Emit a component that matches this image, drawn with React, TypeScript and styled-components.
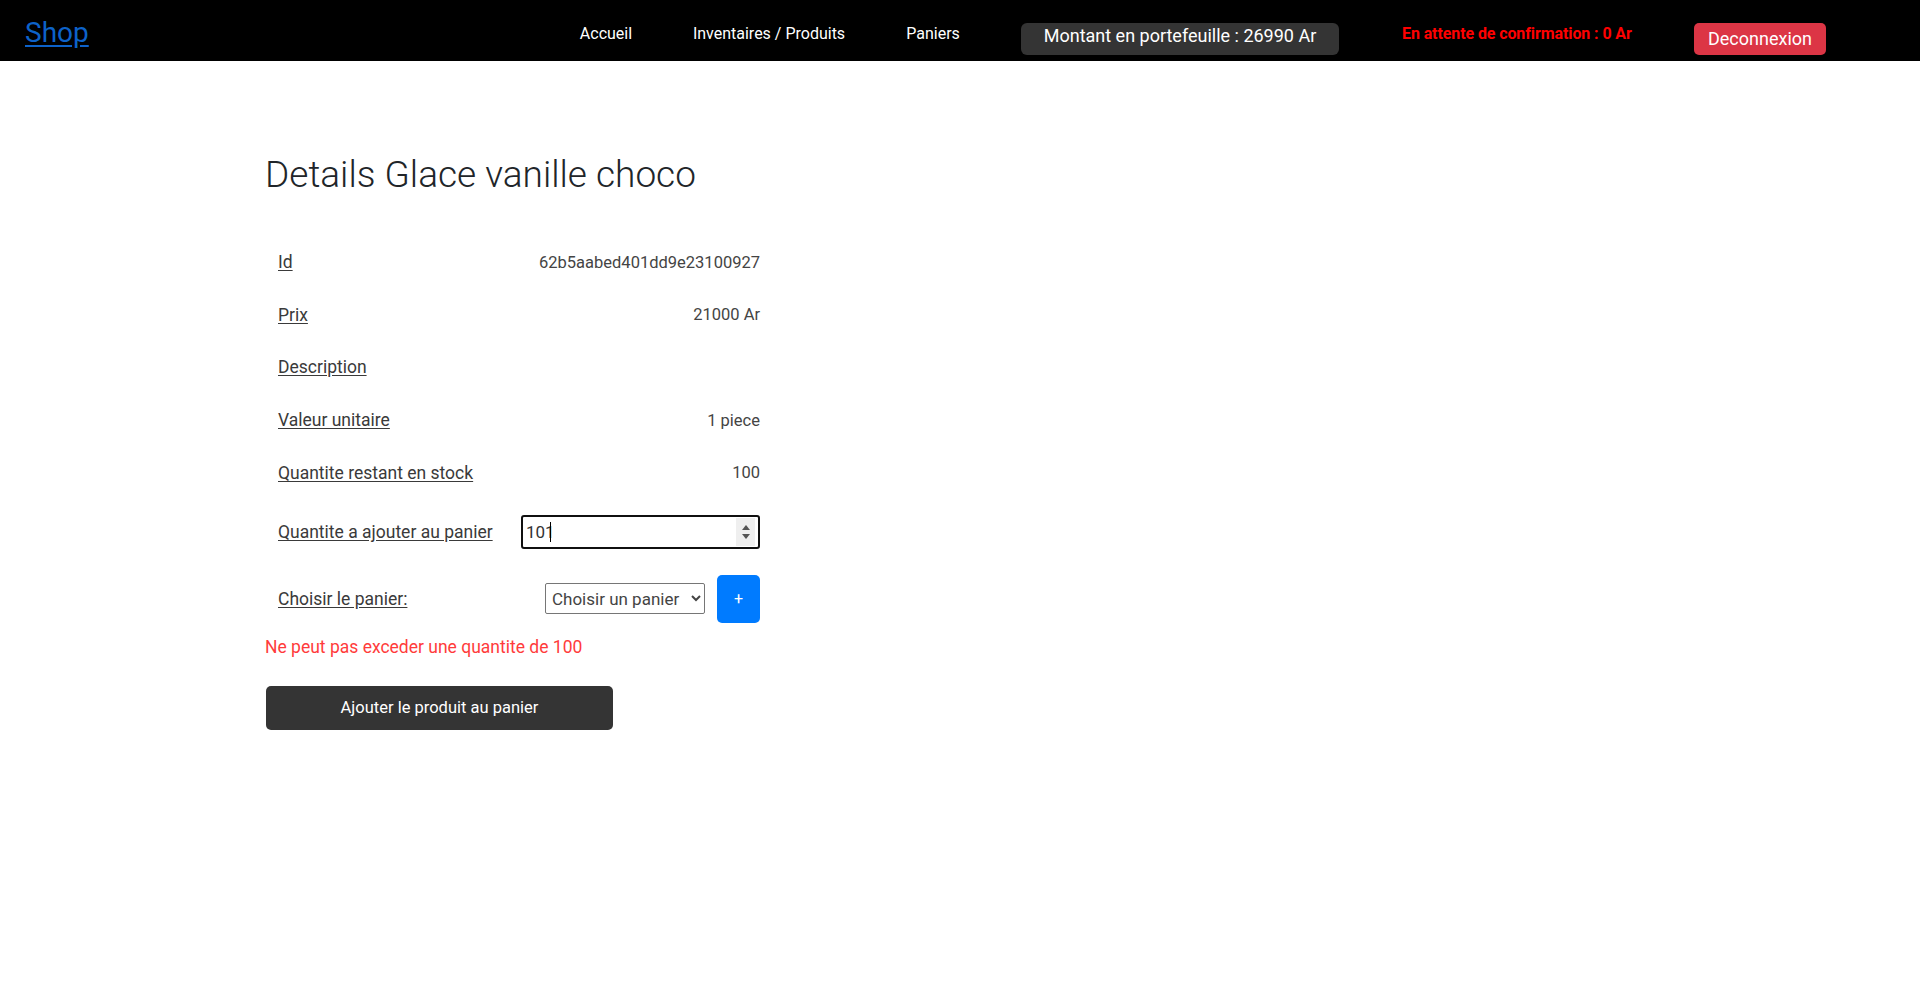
import React from "react";
import styled, { createGlobalStyle } from "styled-components";

const GlobalStyle = createGlobalStyle`
  html, body {
    margin: 0;
    padding: 0;
    background: #ffffff;
    font-family: Roboto, "Liberation Sans", Arial, sans-serif;
    color: #212529;
  }
  * { box-sizing: border-box; }
`;

const Navbar = styled.header`
  height: 61px;
  background: #000000;
  display: flex;
  align-items: flex-start;
  padding: 0 94px 0 25px;
`;

const Brand = styled.a`
  margin-top: 16px;
  font-size: 28px;
  line-height: 34px;
  color: #0d62c9;
  text-decoration: underline;
  text-underline-offset: 3px;
`;

const NavList = styled.nav`
  margin-left: auto;
  display: flex;
  align-items: flex-start;
  gap: 63px;
  padding-top: 23px;
`;

const NavLink = styled.a<{ $w: number }>`
  width: ${(p) => p.$w}px;
  font-size: 16px;
  line-height: 22px;
  color: #ffffff;
  text-decoration: none;
  white-space: nowrap;
  display: flex;
  justify-content: center;
`;

const Wallet = styled.div`
  width: 318px;
  height: 32px;
  background: #343434;
  border-radius: 6px;
  color: #ffffff;
  font-size: 18px;
  line-height: 26px;
  text-align: center;
  white-space: nowrap;
`;

const Pending = styled.div`
  width: 229px;
  font-size: 16px;
  line-height: 22px;
  font-weight: 700;
  letter-spacing: -0.1px;
  color: #ff0000;
  white-space: nowrap;
`;

const LogoutButton = styled.button`
  width: 132px;
  height: 32px;
  border: none;
  border-radius: 5px;
  background: #dc3545;
  color: #ffffff;
  font-family: inherit;
  font-size: 18px;
  padding: 0 0 2px;
`;

const Main = styled.main`
  padding: 92px 0 0 265px;
`;

const Title = styled.h1`
  margin: 0 0 39px;
  font-size: 37px;
  line-height: 44px;
  font-weight: 300;
  color: #212529;
`;

const DetailTable = styled.section`
  width: 495px;
  display: flex;
  flex-direction: column;
`;

const Row = styled.div<{ $h: number }>`
  height: ${(p) => p.$h}px;
  display: grid;
  grid-template-columns: 256px 239px;
  align-items: center;
`;

const Label = styled.span`
  padding-left: 13px;
  font-size: 17.5px;
  color: #3a3a3a;
  text-decoration: underline;
  text-underline-offset: 2px;
  white-space: nowrap;
`;

const Value = styled.span`
  text-align: right;
  font-size: 16.5px;
  color: #444444;
  white-space: nowrap;
`;

const InputWrap = styled.div`
  position: relative;
  height: 34px;
`;

const QtyInput = styled.input`
  width: 100%;
  height: 34px;
  border: 2px solid #101010;
  border-radius: 3px;
  outline: none;
  padding: 0 24px 0 3px;
  font-family: inherit;
  font-size: 17px;
  color: #333333;
  background: #ffffff;
`;

const Spinner = styled.div`
  position: absolute;
  right: 5px;
  top: 3px;
  width: 19px;
  height: 28px;
  background: #efefef;
  display: flex;
  align-items: center;
  justify-content: center;
`;

const Caret = styled.span`
  position: absolute;
  left: 29px;
  top: 7px;
  width: 1px;
  height: 20px;
  background: #000000;
`;

const PanierCell = styled.div`
  display: flex;
  justify-content: flex-end;
  align-items: center;
  gap: 12px;
`;

const PanierSelect = styled.select`
  width: 160px;
  height: 31px;
  border: 1px solid #767676;
  border-radius: 2px;
  background: #ffffff;
  font-family: inherit;
  font-size: 17px;
  color: #444444;
  padding: 0 2px;
`;

const PlusButton = styled.button`
  width: 43px;
  height: 48px;
  border: none;
  border-radius: 5px;
  background: #007bff;
  color: #ffffff;
  font-family: inherit;
  font-size: 16px;
  padding: 0;
`;

const ErrorText = styled.p`
  margin: 1px 0 0;
  font-size: 17.5px;
  line-height: 26px;
  color: #ff3b3b;
`;

const SubmitButton = styled.button`
  margin-top: 26px;
  margin-left: 1px;
  width: 347px;
  height: 44px;
  border: none;
  border-radius: 5px;
  background: #343434;
  color: #ffffff;
  font-family: inherit;
  font-size: 16.5px;
  padding: 0;
`;

const details = [
  { label: "Id", value: "62b5aabed401dd9e23100927" },
  { label: "Prix", value: "21000 Ar" },
  { label: "Description", value: "" },
  { label: "Valeur unitaire", value: "1 piece" },
  { label: "Quantite restant en stock", value: "100" },
];

export default function App() {
  return (
    <>
      <GlobalStyle />
      <Navbar>
        <Brand href="#">Shop</Brand>
        <NavList>
          <NavLink $w={48} href="#">Accueil</NavLink>
          <NavLink $w={152} href="#">Inventaires / Produits</NavLink>
          <NavLink $w={50} href="#">Paniers</NavLink>
          <Wallet>Montant en portefeuille : 26990 Ar</Wallet>
          <Pending>En attente de confirmation : 0 Ar</Pending>
          <LogoutButton>Deconnexion</LogoutButton>
        </NavList>
      </Navbar>
      <Main>
        <Title>Details Glace vanille choco</Title>
        <DetailTable>
          {details.map((d) => (
            <Row $h={52.6} key={d.label}>
              <Label>{d.label}</Label>
              <Value>{d.value}</Value>
            </Row>
          ))}
          <Row $h={66}>
            <Label>Quantite a ajouter au panier</Label>
            <InputWrap>
              <QtyInput type="text" defaultValue="101" />
              <Caret />
              <Spinner>
                <svg width="10" height="20" viewBox="0 0 10 20">
                  <path d="M1 8 L5 3 L9 8 Z" fill="#555" />
                  <path d="M1 12 L5 17 L9 12 Z" fill="#555" />
                </svg>
              </Spinner>
            </InputWrap>
          </Row>
          <Row $h={68}>
            <Label>Choisir le panier:</Label>
            <PanierCell>
              <PanierSelect defaultValue="">
                <option value="">Choisir un panier</option>
              </PanierSelect>
              <PlusButton>+</PlusButton>
            </PanierCell>
          </Row>
        </DetailTable>
        <ErrorText>Ne peut pas exceder une quantite de 100</ErrorText>
        <SubmitButton>Ajouter le produit au panier</SubmitButton>
      </Main>
    </>
  );
}
